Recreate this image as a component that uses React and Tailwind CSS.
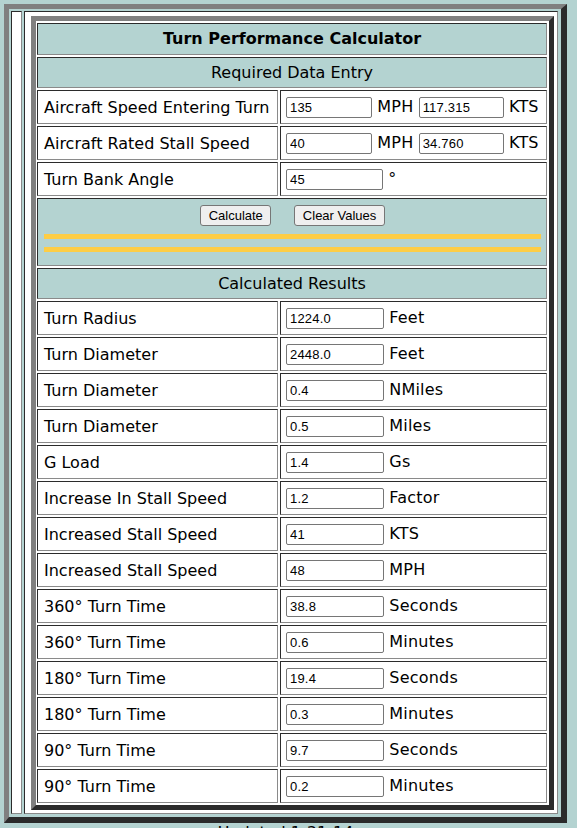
import React from "react";

const CELL =
  "border border-t-[#2b2b2b] border-l-[#2b2b2b] border-r-[#8a8a8a] border-b-[#8a8a8a]";

const results = [
  ["Turn Radius", "1224.0", "Feet"],
  ["Turn Diameter", "2448.0", "Feet"],
  ["Turn Diameter", "0.4", "NMiles"],
  ["Turn Diameter", "0.5", "Miles"],
  ["G Load", "1.4", "Gs"],
  ["Increase In Stall Speed", "1.2", "Factor"],
  ["Increased Stall Speed", "41", "KTS"],
  ["Increased Stall Speed", "48", "MPH"],
  ["360° Turn Time", "38.8", "Seconds"],
  ["360° Turn Time", "0.6", "Minutes"],
  ["180° Turn Time", "19.4", "Seconds"],
  ["180° Turn Time", "0.3", "Minutes"],
  ["90° Turn Time", "9.7", "Seconds"],
  ["90° Turn Time", "0.2", "Minutes"],
];

function Field({ value, w }) {
  return (
    <input
      readOnly
      value={value}
      className={`${w} h-[21px] align-baseline border border-[#767676] rounded-[2px] bg-white px-[3px] text-[13px] text-black outline-none`}
      style={{ fontFamily: '"Liberation Sans", Arial, sans-serif' }}
    />
  );
}

function Row({ label, children }) {
  return (
    <div className="flex gap-[2px] h-[34px]">
      <div className={`${CELL} w-[241px] bg-white flex items-center pl-[6px] pt-[1px] whitespace-nowrap`}>
        {label}
      </div>
      <div className={`${CELL} w-[267px] bg-white flex items-center pl-[5px]`}>
        <div className="whitespace-nowrap leading-[21px] tracking-[0.2px]">{children}</div>
      </div>
    </div>
  );
}

function Header({ children, h, bold }) {
  return (
    <div
      className={`${CELL} ${h} bg-[#b4d3d1] flex items-center justify-center ${bold ? "font-bold" : ""}`}
    >
      {children}
    </div>
  );
}

export default function App() {
  return (
    <div
      className="min-h-screen bg-[#b4d3d1] pt-[4px] pl-[4px] text-[16px] text-black"
      style={{ fontFamily: '"DejaVu Sans", Verdana, sans-serif' }}
    >
      <div className="w-[563px] flex gap-[2px] border-[5px] border-r-[6px] border-b-[6px] border-t-[#808080] border-l-[#808080] border-r-[#2b2b2b] border-b-[#2b2b2b] pt-[2px] pl-[2px] pr-[3px] pb-[3px]">
        <div className={`${CELL} w-[11px] bg-white`} />
        <div className={`${CELL} w-[534px] bg-white pt-[4px] pl-[6px] pr-[3px] pb-[3px]`}>
          <div className="w-[523px] border-[5px] border-t-[#808080] border-l-[#808080] border-r-[#2b2b2b] border-b-[#2b2b2b] bg-white pt-[2px] pl-[1px] pr-[2px] pb-[2px] flex flex-col gap-[2px]">
            <Header h="h-[32px]" bold>
              Turn Performance Calculator
            </Header>
            <Header h="h-[31px]">Required Data Entry</Header>
            <Row label="Aircraft Speed Entering Turn">
              <Field value="135" w="w-[86px]" /> MPH <Field value="117.315" w="w-[85px]" /> KTS
            </Row>
            <Row label="Aircraft Rated Stall Speed">
              <Field value="40" w="w-[86px]" /> MPH <Field value="34.760" w="w-[85px]" /> KTS
            </Row>
            <Row label="Turn Bank Angle">
              <Field value="45" w="w-[97px]" /> °
            </Row>
            <div className={`${CELL} h-[68px] bg-[#b4d3d1] flex flex-col pt-[6px] pl-[6px] pr-[5px]`}>
              <div
                className="flex justify-center gap-[23px] text-[13px]"
                style={{ fontFamily: '"Liberation Sans", Arial, sans-serif' }}
              >
                <button className="h-[21px] px-[7.5px] bg-[#efefef] border border-[#767676] rounded-[3px] text-black">
                  Calculate
                </button>
                <button className="h-[21px] px-[7.5px] bg-[#efefef] border border-[#767676] rounded-[3px] text-black">
                  Clear Values
                </button>
              </div>
              <div className="mt-[8px] h-[5px] bg-[#fdcd45]" />
              <div className="mt-[8px] h-[5px] bg-[#fdcd45]" />
            </div>
            <Header h="h-[31px]">Calculated Results</Header>
            {results.map(([l, v, u], i) => (
              <Row key={i} label={l}>
                <Field value={v} w="w-[98px]" /> {u}
              </Row>
            ))}
          </div>
        </div>
      </div>
      <div className="w-[563px] text-center leading-[19px]">Updated 1-31-14</div>
    </div>
  );
}
